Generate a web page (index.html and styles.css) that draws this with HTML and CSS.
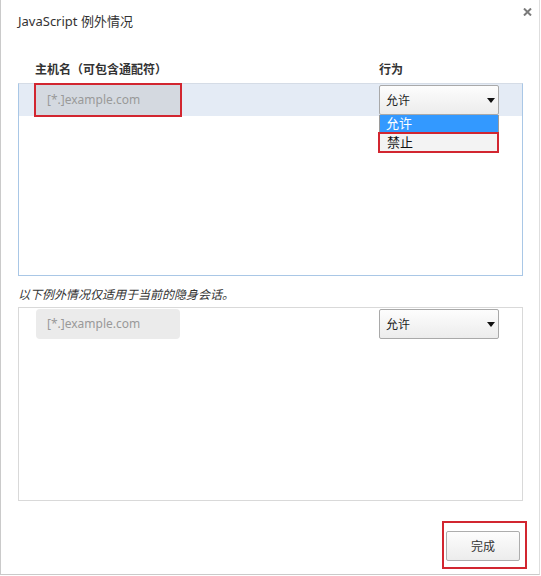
FILE: index.html
```html
<!DOCTYPE html>
<html lang="zh-CN">
<head>
<meta charset="utf-8">
<title>JavaScript 例外情况</title>
<link rel="stylesheet" href="styles.css">
</head>
<body>
<div class="dialog">
  <div class="title">JavaScript 例外情况</div>
  <div class="close" aria-label="关闭">
    <svg width="9" height="8" viewBox="0 0 9 8"><path d="M1 0.5 L8 7.5 M8 0.5 L1 7.5" stroke="#7a7a7a" stroke-width="2"/></svg>
  </div>

  <div class="col-head">
    <span class="col-host">主机名（可包含通配符）</span>
    <span class="col-action">行为</span>
  </div>

  <div class="list list-focus">
    <div class="row row-selected">
      <div class="host host-active">[*.]example.com</div>
      <div class="select-wrap">
        <div class="select">
          <span>允许</span>
          <svg class="arrow" width="8" height="5" viewBox="0 0 8 5"><path d="M0 0 H8 L4 5 Z" fill="#111"/></svg>
        </div>
        <div class="dropdown">
          <div class="opt opt-hl">允许</div>
          <div class="opt opt-mark">禁止</div>
        </div>
      </div>
    </div>
  </div>

  <div class="note">以下例外情况仅适用于当前的隐身会话。</div>

  <div class="list">
    <div class="row">
      <div class="host host-plain">[*.]example.com</div>
      <div class="select-wrap">
        <div class="select">
          <span>允许</span>
          <svg class="arrow" width="8" height="5" viewBox="0 0 8 5"><path d="M0 0 H8 L4 5 Z" fill="#111"/></svg>
        </div>
      </div>
    </div>
  </div>

  <div class="footer">
    <div class="mark-box">
      <button class="btn">完成</button>
    </div>
  </div>
</div>
</body>
</html>
```
FILE: styles.css
```css
* { box-sizing: border-box; }
html, body { margin: 0; padding: 0; background: #fff; }
body {
  font-family: "Noto Sans", "Noto Sans CJK SC", sans-serif;
  font-size: 12px;
  color: #333;
}
.dialog {
  position: relative;
  width: 540px;
  height: 575px;
  border-left: 1px solid #cacaca;
  border-right: 1px solid #dedede;
  border-bottom: 1px solid #cacaca;
  padding: 11px 0 0 17px;
  display: flex;
  flex-direction: column;
}
.title {
  font-size: 13px;
  line-height: 20px;
  height: 20px;
  color: #333;
}
.close {
  position: absolute;
  top: 8px;
  left: 522px;
  width: 9px;
  height: 8px;
  line-height: 0;
}
.col-head {
  margin-top: 31px;
  height: 16px;
  line-height: 16px;
  font-weight: bold;
  display: flex;
}
.col-host { margin-left: 17px; width: 344px; }
.list {
  margin-top: 5px;
  width: 505px;
  height: 194px;
  border: 1px solid #d9d9d9;
}
.list-focus {
  height: 193px;
  border-color: #a9c7e6;
  border-top-color: #d5dce6;
}
.row {
  height: 32px;
  padding: 1px 0 0 17px;
  display: flex;
  align-items: flex-start;
}
.row-selected { background: #e4ebf5; }
.host {
  width: 144px;
  height: 30px;
  line-height: 30px;
  padding-left: 11px;
  color: #999;
  font-size: 12px;
}
.host-active {
  background: #d4d9e0;
  outline: 2px solid #d22630;
}
.host-plain {
  background: #ebebeb;
  border-radius: 4px;
}
.select-wrap {
  position: relative;
  margin-left: 199px;
  width: 120px;
}
.select {
  height: 30px;
  border: 1px solid #a9a9a9;
  border-radius: 2px;
  background: linear-gradient(#fdfdfd, #ececec);
  display: flex;
  align-items: center;
  justify-content: space-between;
  padding: 0 3px 0 6px;
  color: #222;
  font-size: 12px;
}
.arrow { display: block; }
.dropdown {
  position: absolute;
  top: 30px;
  left: 0;
  width: 120px;
  border: 1px solid #9a9a9a;
  border-top: none;
  background: #fff;
}
.opt {
  font-size: 13px;
  padding-left: 6px;
  color: #111;
}
.opt-hl {
  height: 17px;
  line-height: 17px;
  background: #3399ff;
  color: #fff;
}
.opt-mark {
  height: 21px;
  line-height: 17px;
  margin: 0 -1px -1px -2px;
  padding-left: 7px;
  border: 2px solid #d22630;
  background: #f3f3f3;
}
.note {
  margin-top: 11px;
  height: 16px;
  line-height: 16px;
  font-style: italic;
  color: #333;
}
.note + .list { margin-top: 4px; }
.footer {
  margin-top: 20px;
  display: flex;
  justify-content: flex-end;
  padding-right: 12px;
}
.mark-box {
  border: 2px solid #d22630;
  padding: 8px 5px 6px 2px;
}
.btn {
  display: block;
  width: 74px;
  height: 30px;
  border: 1px solid #adadad;
  border-radius: 2px;
  background: linear-gradient(#fdfdfd, #ececec);
  font-family: "Noto Sans", "Noto Sans CJK SC", sans-serif;
  font-size: 12px;
  color: #333;
  padding: 0;
}
```
